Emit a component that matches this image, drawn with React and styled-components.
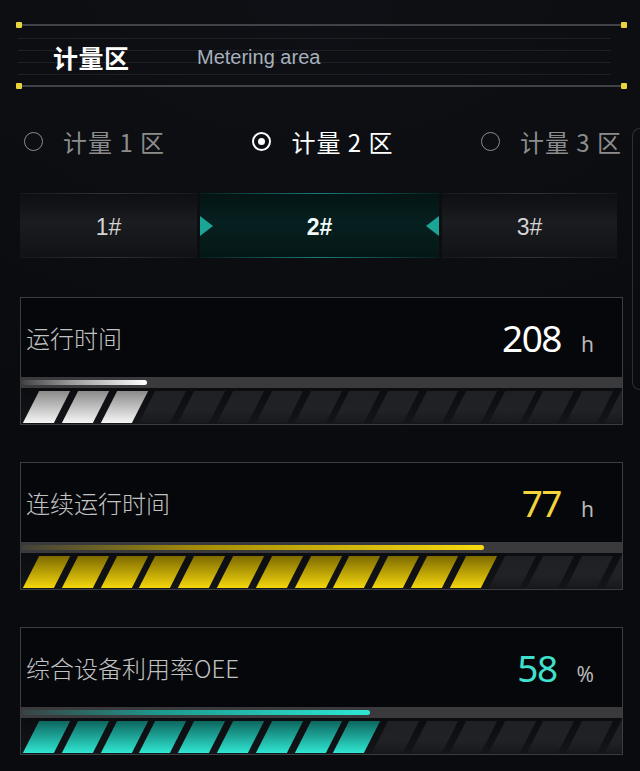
import React from 'react'
import styled, { createGlobalStyle } from 'styled-components'

const GlobalStyle = createGlobalStyle`
  html, body {
    margin: 0;
    padding: 0;
    background: #0b0d11;
  }
  body {
    font-family: "Noto Sans CJK SC", "Noto Sans", sans-serif;
    color: #c4c4c4;
  }
`

const ZONES = ['计量 1 区', '计量 2 区', '计量 3 区']
const TABS = ['1#', '2#', '3#']

const METRICS = [
  { label: '运行时间', value: '208', unit: 'h', pct: 0.208, tone: 'white' },
  { label: '连续运行时间', value: '77', unit: 'h', pct: 0.77, tone: 'yellow' },
  { label: '综合设备利用率OEE', value: '58', unit: '%', pct: 0.58, tone: 'teal' },
]

const TONES = {
  white: {
    text: '#ffffff',
    line: 'linear-gradient(to right, rgba(255,255,255,0.05), #9c9c9c 40%, #ffffff)',
    stripe: 'linear-gradient(to bottom, #8a8a8a, #f6f6f6)',
  },
  yellow: {
    text: '#f3d43a',
    line: 'linear-gradient(to right, rgba(240,210,10,0.05), #a88f06 40%, #f7da10)',
    stripe: 'linear-gradient(to bottom, #7d6a00, #f4d60c)',
  },
  teal: {
    text: '#3fe0cd',
    line: 'linear-gradient(to right, rgba(40,220,200,0.05), #1c9a8e 40%, #2de8d4)',
    stripe: 'linear-gradient(to bottom, #0d665e, #30e6d2)',
  },
}

const SEGMENTS = 16

const App = () => {
  const zone = 1
  const tab = 1
  return (
    <>
      <GlobalStyle />
      <Page>
        <Main>
          <Header>
            <Title>计量区</Title>
            <Subtitle>Metering area</Subtitle>
          </Header>

          <RadioRow>
            {ZONES.map((z, i) => (
              <RadioItem key={z} $checked={i === zone}>
                <RadioDot $checked={i === zone} />
                <span>{z}</span>
              </RadioItem>
            ))}
          </RadioRow>

          <Tabs>
            {TABS.map((t, i) =>
              i === tab ? (
                <Tab key={t} $active>
                  <Arrow $dir="right" />
                  <TabLabel $active>{t}</TabLabel>
                  <Arrow $dir="left" />
                </Tab>
              ) : (
                <Tab key={t}>
                  <TabLabel>{t}</TabLabel>
                </Tab>
              )
            )}
          </Tabs>

          <Cards>
            {METRICS.map((m) => {
              const tone = TONES[m.tone]
              const filled = Math.round(m.pct * 15)
              return (
                <Card key={m.label}>
                  <CardTop>
                    <Label>{m.label}</Label>
                    <ValueWrap>
                      <Value $color={tone.text}>{m.value}</Value>
                      <Unit>{m.unit}</Unit>
                    </ValueWrap>
                  </CardTop>
                  <Track>
                    <TrackFill $bg={tone.line} style={{ width: `${m.pct * 100}%` }} />
                  </Track>
                  <Stripes>
                    {Array.from({ length: SEGMENTS }).map((_, i) => (
                      <Segment key={i} $bg={i < filled ? tone.stripe : null} />
                    ))}
                  </Stripes>
                </Card>
              )
            })}
          </Cards>
        </Main>
        <Rail />
      </Page>
    </>
  )
}

export default App

const Page = styled.div`
  display: flex;
  width: 640px;
  min-height: 771px;
  background: radial-gradient(120% 60% at 50% 0%, #0e1015 0%, #090b0e 100%);
  overflow: hidden;
`

const Main = styled.div`
  flex: 0 0 628px;
  box-sizing: border-box;
  padding: 24px 3px 0 18px;
`

const Header = styled.div`
  position: relative;
  height: 63px;
  box-sizing: border-box;
  border-top: 2px solid #3f4247;
  border-bottom: 2px solid #3f4247;
  display: flex;
  align-items: center;
  padding-left: 35px;
  background: repeating-linear-gradient(
    to bottom,
    transparent 0px,
    transparent 11px,
    #1d2025 11px,
    #1d2025 12px
  );
  background-size: calc(100% - 14px) 100%;
  background-repeat: no-repeat;
  background-position: 0 1px;

  &::before,
  &::after {
    content: '';
    position: absolute;
    width: 6px;
    height: 6px;
    background: #e9d43c;
    border-radius: 1px;
  }
  &::before {
    left: -2px;
    top: -4px;
    box-shadow: 0 61px 0 #e9d43c;
  }
  &::after {
    right: -2px;
    top: -4px;
    box-shadow: 0 61px 0 #e9d43c;
  }
`

const Title = styled.h1`
  margin: 2px 0 0;
  font-size: 25px;
  font-weight: 700;
  color: #ffffff;
  letter-spacing: 0.5px;
  width: 144px;
`

const Subtitle = styled.span`
  font-family: "Liberation Sans", Arial, sans-serif;
  font-size: 20px;
  color: #a7b0bb;
  margin-top: 4px;
`

const RadioRow = styled.div`
  display: flex;
  justify-content: space-between;
  align-items: center;
  height: 40px;
  margin-top: 34px;
  padding: 0 3px 0 6px;
`

const RadioItem = styled.label`
  display: flex;
  align-items: center;
  gap: 20px;
  font-size: 24px;
  letter-spacing: 1px;
  color: ${(p) => (p.$checked ? '#ffffff' : '#8c8c8c')};
  white-space: pre;
`

const RadioDot = styled.span`
  width: 19px;
  height: 19px;
  box-sizing: border-box;
  border-radius: 50%;
  border: ${(p) => (p.$checked ? '2px solid #ffffff' : '1.5px solid #8c8c8c')};
  display: flex;
  align-items: center;
  justify-content: center;

  &::after {
    content: '';
    width: 7px;
    height: 7px;
    border-radius: 50%;
    background: #ffffff;
    display: ${(p) => (p.$checked ? 'block' : 'none')};
  }
`

const Tabs = styled.div`
  display: grid;
  grid-template-columns: 177px 239px 175px;
  column-gap: 3px;
  margin: 32px 0 0 2px;
  height: 65px;
`

const Tab = styled.div`
  display: flex;
  align-items: center;
  box-sizing: border-box;
  border-top: 1px solid;
  border-bottom: 1px solid;
  border-left: 0;
  border-right: 0;
  border-image: ${(p) =>
      p.$active
        ? 'linear-gradient(to right, rgba(20,110,110,0.1), #1a7c7b 50%, rgba(20,110,110,0.1))'
        : 'linear-gradient(to right, rgba(60,62,66,0.15), #303236 50%, rgba(60,62,66,0.15))'}
    1;
  background: ${(p) =>
    p.$active
      ? 'linear-gradient(to bottom, #031414 0%, #06201f 45%, #041716 100%)'
      : 'linear-gradient(to bottom, #0e0f12 0%, #1b1c1f 45%, #111215 100%)'};
`

const TabLabel = styled.div`
  flex: 1;
  text-align: center;
  padding-top: 3px;
  font-family: "Liberation Sans", Arial, sans-serif;
  font-size: 23px;
  font-weight: ${(p) => (p.$active ? 700 : 400)};
  color: ${(p) => (p.$active ? '#f2fbfa' : '#d4d4d4')};
`

const Arrow = styled.span`
  width: 0;
  height: 0;
  border-top: 10px solid transparent;
  border-bottom: 10px solid transparent;
  ${(p) =>
    p.$dir === 'right'
      ? 'border-left: 13px solid #1aa596;'
      : 'border-right: 13px solid #1aa596;'}
`

const Cards = styled.div`
  display: flex;
  flex-direction: column;
  gap: 37px;
  margin: 39px 0 0 2px;
  width: 603px;
`

const Card = styled.div`
  border: 1px solid #3a3d42;
  background: #06070a;
  display: flex;
  flex-direction: column;
`

const CardTop = styled.div`
  height: 79px;
  display: flex;
  align-items: center;
  justify-content: space-between;
  padding: 0 28px 0 5px;
  box-sizing: border-box;
`

const Label = styled.span`
  font-size: 24px;
  color: #c2c2c2;
  font-weight: 300;
`

const ValueWrap = styled.div`
  display: flex;
  align-items: baseline;
  gap: 20px;
`

const Value = styled.span`
  font-family: "Noto Sans", "Liberation Sans", sans-serif;
  font-size: 37px;
  color: ${(p) => p.$color};
  letter-spacing: -1.5px;
`

const Unit = styled.span`
  font-family: "Noto Sans", "Liberation Sans", sans-serif;
  font-size: 21px;
  color: #b8b8b8;
`

const Track = styled.div`
  height: 11px;
  background: #3a3a3c;
  display: flex;
  align-items: center;
  padding-left: 1px;
`

const TrackFill = styled.div`
  height: 5px;
  border-radius: 3px;
  background: ${(p) => p.$bg};
`

const Stripes = styled.div`
  height: 36px;
  box-sizing: border-box;
  padding: 3px 0 1px 10px;
  display: flex;
  gap: 7.8px;
  overflow: hidden;
  background: linear-gradient(to bottom, #0b0c0f, #141518);
`

const Segment = styled.div`
  flex: 0 0 31px;
  height: 100%;
  transform: skewX(-27deg);
  background: ${(p) => p.$bg || 'linear-gradient(to bottom, #1e2024, #202226 60%, #18191c)'};
`

const Rail = styled.div`
  margin: 128px 0 0 4px;
  height: 262px;
  flex: 1;
  box-sizing: border-box;
  border: 1px solid #2b2e33;
  border-right: none;
  border-radius: 10px 0 0 10px;
`
